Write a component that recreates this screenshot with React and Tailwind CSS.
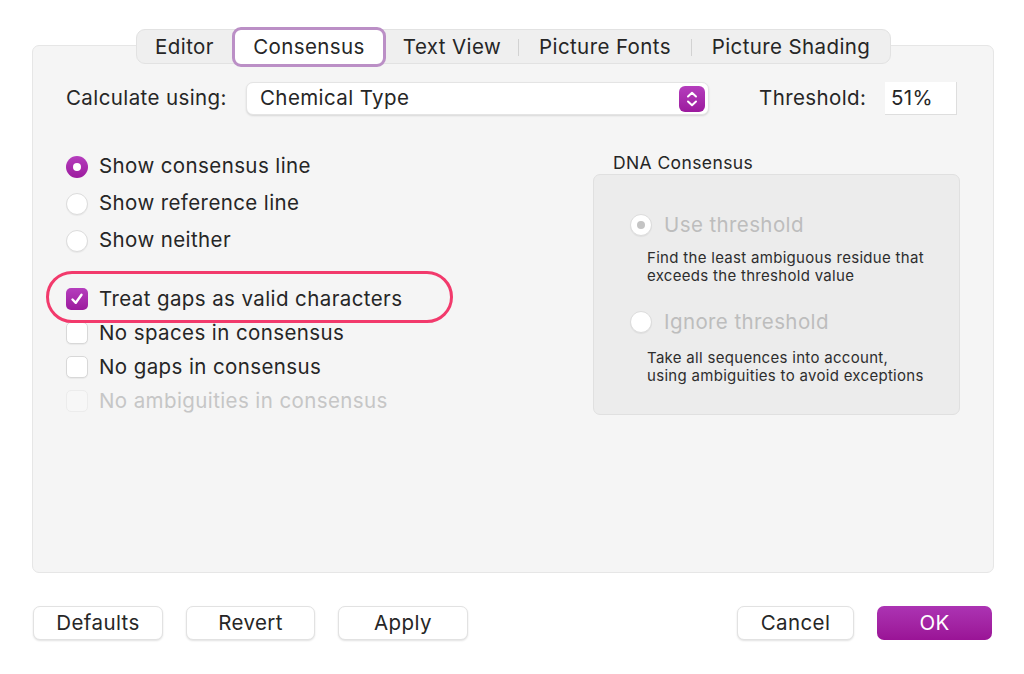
import React from "react";

const font = { fontFamily: "Inter, 'Liberation Sans', sans-serif" };

const Radio = ({ checked, disabled }) => {
  if (checked && !disabled)
    return (
      <span className="w-[22px] h-[22px] rounded-full bg-gradient-to-b from-[#b53dbd] to-[#9c1a9e] flex items-center justify-center shrink-0">
        <span className="w-[8px] h-[8px] rounded-full bg-white" />
      </span>
    );
  return (
    <span className="w-[22px] h-[22px] rounded-full bg-white border border-[#dcdcdc] shadow-[0_1px_1px_rgba(0,0,0,0.05)] flex items-center justify-center shrink-0">
      {checked && <span className="w-[8px] h-[8px] rounded-full bg-[#c4c4c4]" />}
    </span>
  );
};

const Checkbox = ({ checked, disabled }) => {
  if (checked)
    return (
      <span className="w-[22px] h-[22px] rounded-[5px] bg-gradient-to-b from-[#b53dbd] to-[#9c1a9e] flex items-center justify-center shrink-0">
        <svg width="14" height="14" viewBox="0 0 14 14" fill="none">
          <path d="M2.5 7.5 L5.8 10.8 L11.5 2.8" stroke="white" strokeWidth="2.4" strokeLinecap="round" strokeLinejoin="round" />
        </svg>
      </span>
    );
  return (
    <span
      className={
        "w-[22px] h-[22px] rounded-[5px] border shrink-0 " +
        (disabled ? "bg-[#f7f7f7] border-[#ececec]" : "bg-white border-[#d8d8d8] shadow-[0_1px_1px_rgba(0,0,0,0.05)]")
      }
    />
  );
};

const Button = ({ children, primary, w }) => (
  <div
    className={
      "h-[34px] rounded-[7px] flex items-center justify-center text-[20.5px] " +
      (primary
        ? "bg-gradient-to-b from-[#ac33b3] to-[#9a1396] text-white"
        : "bg-white text-[#262626] border border-[#e2e2e2] shadow-[0_1px_2px_rgba(0,0,0,0.12)]") +
      " " + w
    }
  >
    {children}
  </div>
);

export default function App() {
  return (
    <div className="w-[1024px] h-[674px] bg-white relative overflow-hidden text-[#262626] tracking-[0.4px]" style={font}>
      {/* tab bar */}
      <div className="pt-[29px] flex pl-[136px] relative z-10">
        <div className="h-[35px] flex items-center bg-[#efefef] border border-[#e2e2e2] rounded-[9px] text-[20.5px] pt-[1px]">
          <div className="w-[95px] text-center">Editor</div>
          <div className="w-[154px] h-[40px] -my-[3px] bg-white border-[3px] border-[#bb8fc6] rounded-[9px] flex items-center justify-center">
            Consensus
          </div>
          <div className="w-[132px] text-center">Text View</div>
          <div className="w-px h-[17px] bg-[#d2d2d2]" />
          <div className="w-[172px] text-center">Picture Fonts</div>
          <div className="w-px h-[17px] bg-[#d2d2d2]" />
          <div className="w-[198px] text-center">Picture Shading</div>
        </div>
      </div>

      {/* main panel */}
      <div className="-mt-[19px] ml-[32px] w-[962px] h-[528px] bg-[#f5f5f5] border border-[#e6e6e6] rounded-[7px] pt-[36px]">
        <div className="flex items-center h-[33px] text-[20.5px]">
          <div className="ml-[33px] w-[180px]">Calculate using:</div>
          <div className="w-[463px] h-[33px] bg-white rounded-[7px] border border-[#e4e4e4] shadow-[0_1px_2px_rgba(0,0,0,0.12)] flex items-center justify-between pl-[13px] pr-[3px]">
            <span>Chemical Type</span>
            <span className="w-[26px] h-[26px] rounded-[6px] bg-gradient-to-b from-[#b53dbd] to-[#9c1a9e] flex items-center justify-center">
              <svg width="14" height="18" viewBox="0 0 14 18" fill="none">
                <path d="M3 6.5 L7 2.8 L11 6.5" stroke="white" strokeWidth="2" strokeLinecap="round" strokeLinejoin="round" />
                <path d="M3 11.5 L7 15.2 L11 11.5" stroke="white" strokeWidth="2" strokeLinecap="round" strokeLinejoin="round" />
              </svg>
            </span>
          </div>
          <div className="ml-[50px] w-[126px]">Threshold:</div>
          <div className="w-[72px] h-[33px] bg-white border-b border-r border-[#dedede] flex items-center pl-[6px]">51%</div>
        </div>

        <div className="flex mt-[33px]">
          {/* left column */}
          <div className="ml-[33px] w-[527px] text-[20.5px]">
            <div className="flex flex-col">
              <div className="h-[37px] flex items-center gap-[11px]"><Radio checked />Show consensus line</div>
              <div className="h-[37px] flex items-center gap-[11px]"><Radio />Show reference line</div>
              <div className="h-[37px] flex items-center gap-[11px]"><Radio />Show neither</div>
            </div>
            <div className="flex flex-col mt-[23px]">
              <div className="h-[34px] flex items-center gap-[11px]"><Checkbox checked />Treat gaps as valid characters</div>
              <div className="h-[34px] flex items-center gap-[11px]"><Checkbox />No spaces in consensus</div>
              <div className="h-[34px] flex items-center gap-[11px]"><Checkbox />No gaps in consensus</div>
              <div className="h-[34px] flex items-center gap-[11px] text-[#c6c6c6]"><Checkbox disabled />No ambiguities in consensus</div>
            </div>
          </div>

          {/* right column */}
          <div className="w-[367px] mt-[4px]">
            <div className="pl-[20px] text-[17.5px] h-[22px] flex items-center">DNA Consensus</div>
            <div className="h-[241px] bg-[#ececec] border border-[#e0e0e0] rounded-[7px] pt-[37px] pl-[36px]">
              <div className="flex items-center gap-[12px] text-[20.5px] text-[#bdbdbd] h-[26px]"><Radio checked disabled />Use threshold</div>
              <div className="pl-[17px] mt-[11px] text-[15px] tracking-[0.3px] leading-[18px] text-[#2e2e2e]">
                Find the least ambiguous residue that<br />exceeds the threshold value
              </div>
              <div className="flex items-center gap-[12px] text-[20.5px] text-[#bdbdbd] h-[26px] mt-[24px]"><Radio disabled />Ignore threshold</div>
              <div className="pl-[17px] mt-[14px] text-[15px] tracking-[0.3px] leading-[18px] text-[#2e2e2e]">
                Take all sequences into account,<br />using ambiguities to avoid exceptions
              </div>
            </div>
          </div>
        </div>
      </div>

      {/* bottom buttons */}
      <div className="flex items-center mt-[33px] pl-[33px]">
        <Button w="w-[130px]">Defaults</Button>
        <div className="ml-[23px]"><Button w="w-[129px]">Revert</Button></div>
        <div className="ml-[23px]"><Button w="w-[130px]">Apply</Button></div>
        <div className="ml-[269px]"><Button w="w-[117px]">Cancel</Button></div>
        <div className="ml-[23px]"><Button primary w="w-[115px]">OK</Button></div>
      </div>

      {/* annotation highlight */}
      <div className="absolute left-[46px] top-[271px] w-[407px] h-[52px] rounded-full border-[3px] border-[#f23a6c] pointer-events-none" />
    </div>
  );
}
